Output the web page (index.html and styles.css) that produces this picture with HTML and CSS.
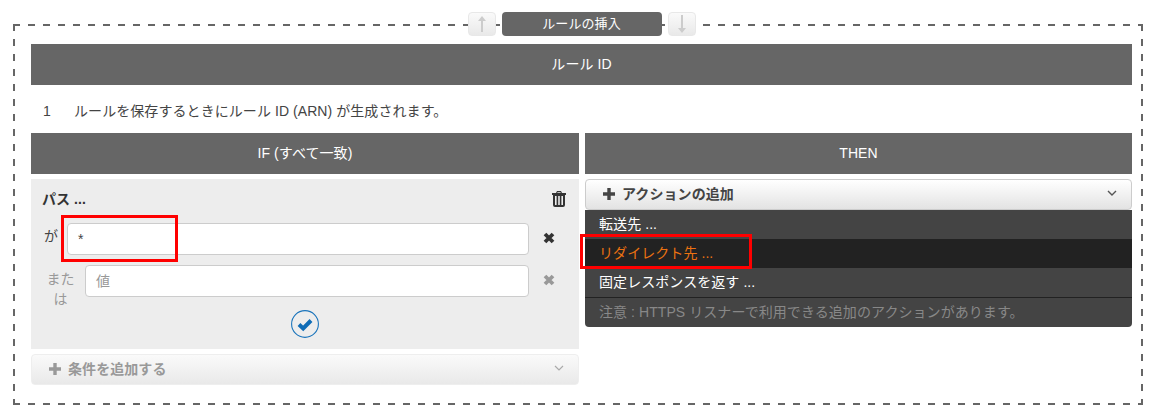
FILE: index.html
```html
<!DOCTYPE html>
<html lang="ja">
<head>
<meta charset="utf-8">
<title>ルールの挿入</title>
<link rel="stylesheet" href="styles.css">
</head>
<body>
<div class="frame">
  <div class="toolbar">
    <button class="arrow"><svg width="8" height="16" viewBox="0 0 8 16"><path d="M4 0 L8 5 H5 V16 H3 V5 H0 Z" fill="#ccc"/></svg></button>
    <div class="title">ルールの挿入</div>
    <button class="arrow"><svg width="8" height="18" viewBox="0 0 8 18"><path d="M4 18 L8 13 H5 V0 H3 V13 H0 Z" fill="#ccc"/></svg></button>
  </div>
  <div class="bar">ルール ID</div>
  <div class="rule-id"><span class="num">1</span><span>ルールを保存するときにルール ID (ARN) が生成されます。</span></div>
  <div class="cols">
    <section class="col">
      <div class="bar">IF (すべて一致)</div>
      <div class="panel">
        <div class="panel-head">
          <strong>パス ...</strong>
          <svg class="trash" width="14" height="16" viewBox="0 0 14 16"><path fill="#333" fill-rule="evenodd" d="M5 0 H9 L10 2 H14 V4 H13 V14 Q13 16 11 16 H3 Q1 16 1 14 V4 H0 V2 H4 Z M5.6 1.3 L5.2 2 H8.8 L8.4 1.3 Z M3 5 V14 H4.6 V5 Z M6.2 5 V14 H7.8 V5 Z M9.4 5 V14 H11 V5 Z"/></svg>
        </div>
        <div class="cond first">
          <span class="lbl">が</span>
          <div class="field"><span class="star">*</span></div>
          <svg class="x" width="12" height="12" viewBox="0 0 12 12"><path d="M2 2 L10 10 M10 2 L2 10" stroke="#333" stroke-width="3.8"/></svg>
          <div class="callout c1"></div>
        </div>
        <div class="cond second">
          <span class="lbl muted">または</span>
          <div class="field ph">値</div>
          <svg class="x" width="12" height="12" viewBox="0 0 12 12"><path d="M2 2 L10 10 M10 2 L2 10" stroke="#999" stroke-width="3.8"/></svg>
        </div>
        <div class="confirm">
          <svg width="28" height="28" viewBox="0 0 28 28"><circle cx="14" cy="14" r="13.4" fill="none" stroke="#1a74bb" stroke-width="1.1"/><path d="M8 14.5 L12.2 18.5 L20 10.5" fill="none" stroke="#0f6cb6" stroke-width="4"/></svg>
        </div>
      </div>
      <div class="add disabled">
        <svg width="12" height="12" viewBox="0 0 12 12"><path d="M6 0 V12 M0 6 H12" stroke="#999" stroke-width="3.4"/></svg>
        <span>条件を追加する</span>
        <svg class="chev" width="10" height="6" viewBox="0 0 10 6"><path d="M1 1 L5 5 L9 1" fill="none" stroke="#aaa" stroke-width="1.2"/></svg>
      </div>
    </section>
    <section class="col">
      <div class="bar">THEN</div>
      <div class="add-wrap">
        <div class="add">
          <svg width="12" height="12" viewBox="0 0 12 12"><path d="M6 0 V12 M0 6 H12" stroke="#444" stroke-width="3.4"/></svg>
          <span>アクションの追加</span>
          <svg class="chev" width="10" height="6" viewBox="0 0 10 6"><path d="M1 1 L5 5 L9 1" fill="none" stroke="#555" stroke-width="1.4"/></svg>
        </div>
        <ul class="menu">
          <li>転送先 ...</li>
          <li class="hot">リダイレクト先 ...<div class="callout c2"></div></li>
          <li>固定レスポンスを返す ...</li>
          <li class="note">注意 : HTTPS リスナーで利用できる追加のアクションがあります。</li>
        </ul>
      </div>
    </section>
  </div>
</div>
</body>
</html>
```
FILE: styles.css
```css
* { box-sizing: border-box; }
html, body { margin: 0; background: #fff; }
body {
  width: 1154px;
  height: 415px;
  padding: 24px 11px 0 13px;
  overflow: hidden;
  font: 14px/20px "Liberation Sans", "Noto Sans CJK JP", sans-serif;
  letter-spacing: .07px;
  color: #444;
}
.frame {
  display: flow-root;
  width: 1130px;
  height: 381px;
  padding: 0 11px 0 18px;
  background:
    repeating-linear-gradient(90deg, #666 0 7px, transparent 7px 15px) left top / 100% 2px no-repeat,
    repeating-linear-gradient(90deg, #666 0 7px, transparent 7px 15px) left bottom / 100% 2px no-repeat,
    repeating-linear-gradient(180deg, #666 0 7px, transparent 7px 15px) left top / 2px 100% no-repeat,
    repeating-linear-gradient(180deg, #666 0 7px, transparent 7px 15px) right top / 2px 100% no-repeat;
}
.toolbar {
  display: flex;
  justify-content: center;
  gap: 6px;
  height: 24px;
  margin-top: -12px;
  margin-bottom: 8px;
}
.arrow {
  width: 28px;
  height: 24px;
  padding: 0;
  display: flex;
  align-items: center;
  justify-content: center;
  border: 1px solid #e8e8e8;
  border-radius: 4px;
  background: linear-gradient(#fafafa, #e9e9e9);
}
.title {
  width: 160px;
  background: #666;
  color: #fff;
  border-radius: 4px;
  text-align: center;
  font-size: 13px;
  line-height: 24px;
}
.bar {
  height: 41px;
  background: #666;
  color: #fff;
  text-align: center;
  line-height: 40px;
}
.rule-id {
  display: flex;
  height: 48px;
  align-items: center;
  padding: 3px 0 0 12px;
}
.num { width: 31px; }
.cols {
  display: grid;
  grid-template-columns: 548px 547px;
  gap: 6px;
  width: 1101px;
}
.panel {
  margin-top: 5px;
  height: 170px;
  background: #ededed;
  padding: 0 0 0 11px;
}
.panel-head {
  display: flex;
  justify-content: space-between;
  align-items: center;
  height: 44px;
  padding: 0 13px 4px 0;
  color: #333;
}
.cond {
  position: relative;
  display: flex;
  align-items: flex-start;
}
.first { height: 32px; margin-bottom: 10px; }
.second { height: 45px; }
.lbl { padding: 4px 9px 0 2px; line-height: 18px; }
.muted {
  width: 43px;
  flex: none;
  color: #999;
  text-align: center;
  line-height: 20px;
  padding: 4px 10px 0 4px;
}
.field {
  flex: 1;
  height: 32px;
  background: #fff;
  border: 1px solid #ccc;
  border-radius: 4px;
  padding: 5px 10px;
}
.star { color: #444; font-size: 14px; }
.ph { color: #999; }
.x { margin: 9px 24px 0 14px; flex: none; }
.confirm { display: flex; justify-content: center; margin-left: -11px; }
.confirm svg { display: block; }
.add {
  display: flex;
  align-items: center;
  height: 31px;
  margin-top: 5px;
  padding: 0 14px 2px 17px;
  border: 1px solid #ddd;
  border-radius: 4px;
  background: linear-gradient(#fff, #e3e3e3);
  font-weight: bold;
  color: #444;
}
.add span { margin-left: 7px; flex: 1; }
.chev { margin-top: -1px; }
.disabled { color: #999; border-color: #eee; background: linear-gradient(#fafafa, #e9e9e9); }
.add-wrap .add { border-color: #ccc; }
.menu {
  list-style: none;
  margin: 0;
  padding: 0;
  background: #444;
  color: #fff;
  border-radius: 0 0 4px 4px;
  height: 117px;
}
.menu li {
  position: relative;
  height: 29px;
  line-height: 28px;
  padding-left: 14px;
  font-size: 14px;
}
.menu .hot { background: #222; color: #ec7211; }
.menu .note { height: 30px; border-top: 1px solid #222; color: #888; }
.callout {
  position: absolute;
  border: 3px solid #f00;
  pointer-events: none;
}
.c1 { left: 19px; top: -8px; width: 117px; height: 47px; }
.c2 { left: -5px; top: -5px; width: 172px; height: 35px; }
```
